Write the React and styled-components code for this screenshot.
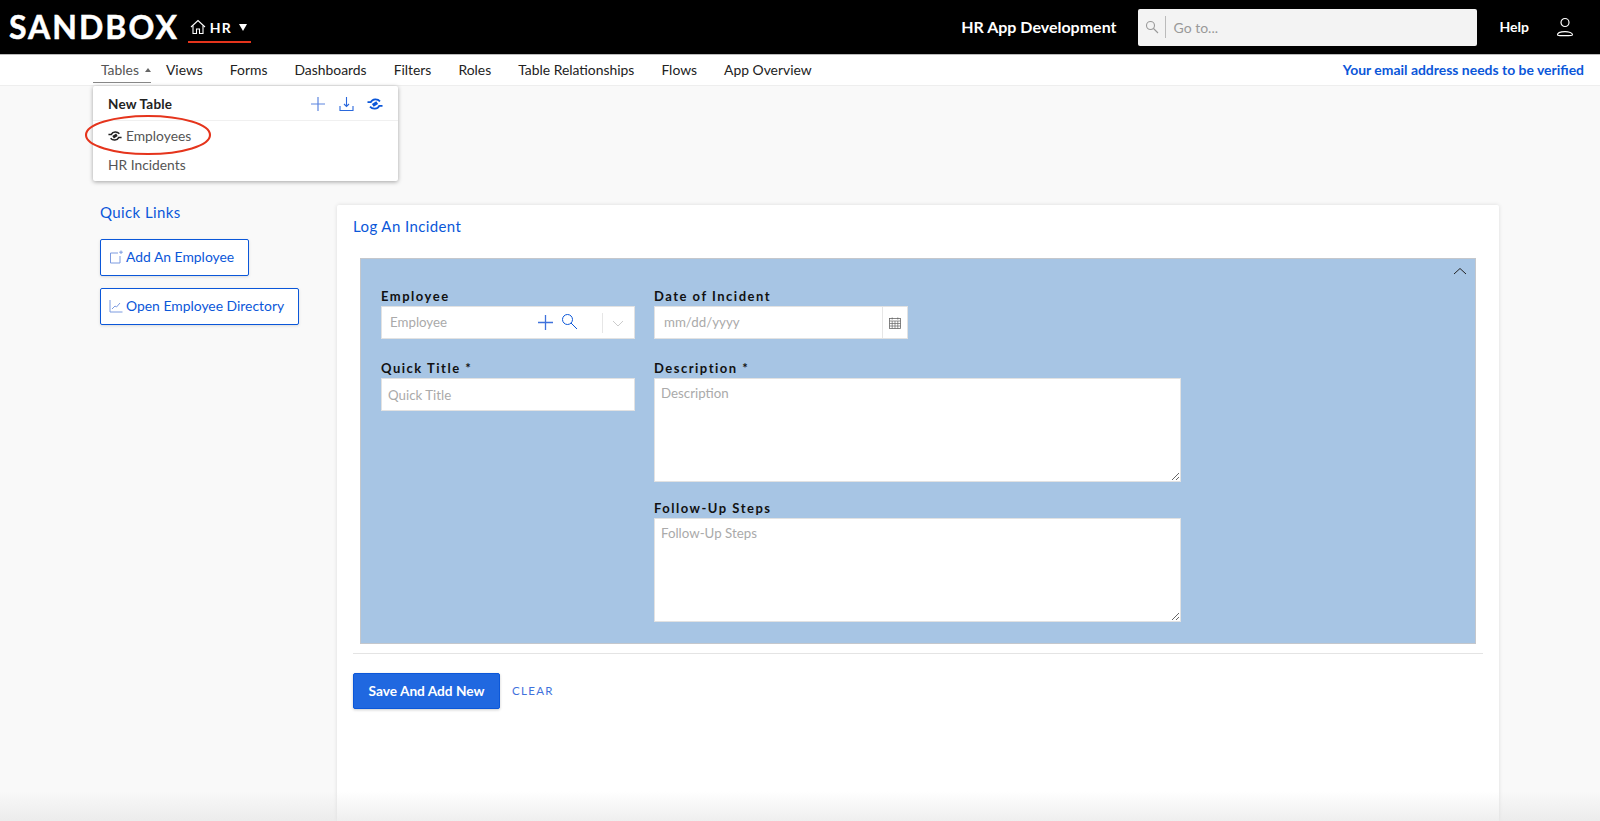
import React from "react";
import styled, { createGlobalStyle } from "styled-components";

const Global = createGlobalStyle`
  html, body { margin: 0; padding: 0; height: 100%; overflow: hidden; }
  body { font-family: "Lato", "Liberation Sans", sans-serif; background: #f9f9f9; color: #222; }
  * { box-sizing: border-box; }
`;

const Page = styled.div`
  position: relative;
  width: 1600px;
  height: 821px;
  overflow: hidden;
  display: flex;
  flex-direction: column;
`;
const Header = styled.header`
  height: 55px;
  flex: none;
  background: #000;
  border-bottom: 1px solid #bbb;
  display: flex;
  align-items: center;
  color: #fff;
  padding: 0 26px 0 9px;
`;
const Logo = styled.div`
  font-size: 32px;
  font-weight: 700;
  letter-spacing: 2px;
  line-height: 1;
  margin-top: -1px;
  -webkit-text-stroke: 0.5px #fff;
`;
const AppSwitch = styled.div`
  margin-left: 9px;
  width: 63px;
  height: 30px;
  margin-top: 2px;
  padding-left: 2px;
  border-bottom: 2px solid #e5341c;
  display: flex;
  align-items: center;
  gap: 4px;
  font-size: 14px;
  font-weight: 700;
  letter-spacing: 1px;
`;
const Caret = styled.span`
  width: 0;
  height: 0;
  border-left: 4.5px solid transparent;
  border-right: 4.5px solid transparent;
  border-top: 7px solid #fff;
  margin-left: 3px;
`;
const Spacer = styled.div`
  flex: 1;
`;
const WorkspaceName = styled.div`
  font-size: 16px;
  font-weight: 700;
  margin-right: 21px;
  padding-bottom: 2px;
`;
const GoTo = styled.div`
  width: 339px;
  height: 37px;
  background: #f3f3f3;
  border-radius: 2px;
  display: flex;
  align-items: center;
  padding-left: 7px;
  color: #999;
  font-size: 14px;
`;
const GoToDivider = styled.span`
  width: 1px;
  height: 22px;
  background: #bbb;
  margin: 0 8px 0 6px;
`;
const Help = styled.div`
  font-size: 14px;
  font-weight: 700;
  margin-left: 23px;
  margin-right: 27px;
  padding-bottom: 2px;
`;
const Nav = styled.nav`
  height: 31px;
  flex: none;
  background: #fff;
  border-bottom: 1px solid #eee;
  display: flex;
  align-items: center;
  padding: 0 16px 0 93px;
  font-size: 13.9px;
  color: #222;
`;
const NavItem = styled.a`
  display: flex;
  align-items: center;
  gap: 6px;
  height: 26px;
  margin-right: ${(p) => p.$gap}px;
  padding: 0 0 0 ${(p) => (p.$active ? 8 : 0)}px;
  border-bottom: 1px solid ${(p) => (p.$active ? "#888" : "transparent")};
  color: ${(p) => (p.$active ? "#555" : "#222")};
`;
const NavCaret = styled.span`
  width: 0;
  height: 0;
  border-left: 3px solid transparent;
  border-right: 3px solid transparent;
  border-bottom: 4px solid #666;
`;
const Verify = styled.a`
  margin-left: auto;
  color: #0b57d9;
  font-weight: 700;
  font-size: 13.95px;
  padding-bottom: 1px;
`;
const Main = styled.main`
  flex: 1;
  display: flex;
  align-items: stretch;
  padding: 119px 101px 0 100px;
  min-height: 0;
`;
const Sidebar = styled.aside`
  width: 237px;
  flex: none;
  display: flex;
  flex-direction: column;
  align-items: flex-start;
`;
const SideTitle = styled.div`
  color: #0b57d9;
  font-size: 15px;
  letter-spacing: 0.4px;
  line-height: 18px;
  margin-top: -2px;
  margin-bottom: 18px;
`;
const QuickLink = styled.a`
  display: flex;
  align-items: center;
  gap: 3px;
  height: 37px;
  padding: 0 14px 2px 8px;
  margin-bottom: 12px;
  background: #fff;
  border: 1px solid #0b57d9;
  border-radius: 2px;
  box-shadow: 0 1px 3px rgba(0, 0, 0, 0.12);
  color: #0b57d9;
  font-size: 13.9px;
`;
const Card = styled.section`
  flex: 1;
  margin-right: 0;
  background: #fff;
  border-radius: 2px 2px 0 0;
  box-shadow: 0 0 4px rgba(0, 0, 0, 0.12);
  padding: 12px 16px 0 16px;
  display: flex;
  flex-direction: column;
`;
const CardTitle = styled.h2`
  margin: 0 0 23px;
  font-weight: 400;
  font-size: 15px;
  line-height: 18px;
  color: #0b57d9;
  letter-spacing: 0.4px;
`;
const FormPanel = styled.div`
  position: relative;
  margin: 0 7px;
  height: 386px;
  background: #a7c5e4;
  border: 1px solid #c4c7cc;
  padding: 29px 0 0 20px;
  display: grid;
  grid-template-columns: 254px 527px;
  column-gap: 19px;
  align-content: start;
`;
const Collapse = styled.svg`
  position: absolute;
  top: 8px;
  right: 8px;
`;
const Column = styled.div`
  display: flex;
  flex-direction: column;
`;
const Field = styled.div`
  margin-bottom: ${(p) => p.$mb}px;
`;
const Label = styled.label`
  display: block;
  font-size: 13px;
  line-height: 16px;
  font-weight: 700;
  letter-spacing: 1.5px;
  color: #111;
  margin-bottom: 2px;
`;
const inputCss = `
  border: 1px solid #e2e2e2;
  background: #fff;
  font-family: "Lato", "Liberation Sans", sans-serif;
  font-size: 13.3px;
  outline: none;
  border-radius: 0;
  &::placeholder { color: #aaa; opacity: 1; }
`;
const TextInput = styled.input`
  ${inputCss}
  display: block;
  width: 254px;
  height: 33px;
  padding: 0 6px;
`;
const TextArea = styled.textarea`
  ${inputCss}
  display: block;
  width: 527px;
  height: 104px;
  padding: 6px 6px;
`;
const Compound = styled.div`
  width: 254px;
  height: 33px;
  background: #fff;
  border: 1px solid #e2e2e2;
  display: flex;
  align-items: center;
  font-size: 13.3px;
  color: #aaa;
`;
const CompoundText = styled.span`
  flex: 1;
  padding: 0 0 2px ${(p) => p.$pad}px;
`;
const VLine = styled.span`
  width: 1px;
  align-self: ${(p) => (p.$full ? "stretch" : "center")};
  height: ${(p) => (p.$full ? "auto" : "20px")};
  background: #e6e6e6;
`;
const CalendarBox = styled.span`
  width: 24px;
  display: flex;
  justify-content: center;
`;
const Divider = styled.hr`
  border: 0;
  height: 1px;
  background: #e4e4e4;
  width: 100%;
  margin: 9px 0 19px;
`;
const Actions = styled.div`
  display: flex;
  align-items: center;
  gap: 12px;
`;
const Primary = styled.button`
  width: 147px;
  height: 36px;
  border: 1px solid #0b57d9;
  border-radius: 2px;
  background: #2068e0;
  color: #fff;
  font-family: inherit;
  font-weight: 700;
  font-size: 13.7px;
  padding: 0 0 2px;
  box-shadow: 0 1px 3px rgba(0, 0, 0, 0.2);
`;
const Clear = styled.a`
  color: #3f72dc;
  font-size: 11.5px;
  letter-spacing: 1.3px;
  padding-bottom: 2px;
`;
const Dropdown = styled.div`
  position: absolute;
  left: 93px;
  top: 86px;
  width: 305px;
  height: 95px;
  background: #fff;
  border-radius: 2px;
  box-shadow: 0 1px 4px rgba(0, 0, 0, 0.35);
  font-size: 14px;
`;
const DropHead = styled.div`
  height: 35px;
  display: flex;
  align-items: center;
  padding: 1px 15px 0 15px;
  border-bottom: 1px solid #f0f0f0;
  font-weight: 700;
  font-size: 13.5px;
  letter-spacing: 0.2px;
  color: #222;
`;
const DropIcons = styled.div`
  margin-left: auto;
  display: flex;
  align-items: center;
  gap: 13px;
`;
const DropRow = styled.div`
  height: 29px;
  display: flex;
  align-items: center;
  gap: 4px;
  padding-left: 15px;
  color: #555;
  font-size: 13.8px;
`;
const Ellipse = styled.svg`
  position: absolute;
  left: 84px;
  top: 114px;
`;
const BottomFade = styled.div`
  position: absolute;
  left: 0;
  right: 0;
  bottom: 0;
  height: 30px;
  background: linear-gradient(rgba(225, 225, 225, 0), rgba(225, 225, 225, 0.55));
  pointer-events: none;
`;

const Handshake = ({ color, size = 16 }) => (
  <svg width={size} height={size} viewBox="0 0 16 16" fill="none" stroke={color}>
    <path d="M0.5 6.2 H3.8 C5.5 2.6 10.5 2.4 13 5.4" strokeWidth="1.7" />
    <path d="M15.5 9.8 H12.2 C10.5 13.4 5.5 13.6 3 10.6" strokeWidth="1.7" />
    <path d="M5.8 9.4 L10.2 6.6" strokeWidth="3.4" />
  </svg>
);

const navItems = [
  ["Views", 27],
  ["Forms", 27],
  ["Dashboards", 27],
  ["Filters", 27],
  ["Roles", 27],
  ["Table Relationships", 27],
  ["Flows", 27],
  ["App Overview", 0],
];

export default function App() {
  return (
    <Page>
      <Global />
      <Header>
        <Logo>SANDBOX</Logo>
        <AppSwitch>
          <svg width="16" height="16" viewBox="0 0 16 16" fill="none" stroke="#fff" strokeWidth="1.1">
            <path d="M1 8 L8 1.5 L15 8" />
            <path d="M3 6.5 V14.5 H6.5 V10 H9.5 V14.5 H13 V6.5" />
          </svg>
          HR
          <Caret />
        </AppSwitch>
        <Spacer />
        <WorkspaceName>HR App Development</WorkspaceName>
        <GoTo>
          <svg width="14" height="14" viewBox="0 0 14 14" fill="none" stroke="#999" strokeWidth="1.1">
            <circle cx="5.5" cy="5.5" r="4" />
            <path d="M8.5 8.5 L13 13" />
          </svg>
          <GoToDivider />
          Go to...
        </GoTo>
        <Help>Help</Help>
        <svg width="18" height="20" viewBox="0 0 18 20" fill="none" stroke="#fff" strokeWidth="1.2">
          <circle cx="9" cy="5.5" r="4" />
          <path d="M1.5 18 C1.5 13.5 16.5 13.5 16.5 18 C16.5 19 1.5 19 1.5 18 Z" />
        </svg>
      </Header>
      <Nav>
        <NavItem $active $gap={15}>
          Tables <NavCaret />
        </NavItem>
        {navItems.map(([t, g]) => (
          <NavItem key={t} $gap={g}>
            {t}
          </NavItem>
        ))}
        <Verify>Your email address needs to be verified</Verify>
      </Nav>
      <Main>
        <Sidebar>
          <SideTitle>Quick Links</SideTitle>
          <QuickLink>
            <svg width="14" height="14" viewBox="0 0 14 14" fill="none" stroke="#7d9be0" strokeWidth="1">
              <path d="M9 3 H1.5 V13 H11 V6" />
              <path d="M12 0.5 V4 M10.2 2.2 H13.8" />
            </svg>
            Add An Employee
          </QuickLink>
          <QuickLink>
            <svg width="14" height="14" viewBox="0 0 14 14" fill="none" stroke="#7d9be0" strokeWidth="1">
              <path d="M1 1 V13 H13.5" />
              <path d="M3 10 L6 7 L7.5 8 L11 4" />
            </svg>
            Open Employee Directory
          </QuickLink>
        </Sidebar>
        <Card>
          <CardTitle>Log An Incident</CardTitle>
          <FormPanel>
            <Collapse width="14" height="8" viewBox="0 0 14 8" fill="none" stroke="#222" strokeWidth="1">
              <path d="M1 7 L7 1.5 L13 7" />
            </Collapse>
            <Column>
              <Field $mb={21}>
                <Label>Employee</Label>
                <Compound>
                  <CompoundText $pad={8}>Employee</CompoundText>
                  <svg width="17" height="17" viewBox="0 0 17 17" fill="none" stroke="#3f72dc" strokeWidth="1.3">
                    <path d="M8.5 1 V16 M1 8.5 H16" />
                  </svg>
                  <svg width="17" height="17" viewBox="0 0 17 17" fill="none" stroke="#0b57d9" strokeWidth="1" style={{ margin: "0 24px 2px 7px" }}>
                    <circle cx="6.5" cy="6.5" r="5" />
                    <path d="M10 10 L16 16" />
                  </svg>
                  <VLine />
                  <svg width="12" height="7" viewBox="0 0 12 7" fill="none" stroke="#ccc" strokeWidth="1" style={{ margin: "2px 10px 0 9px" }}>
                    <path d="M1 1 L6 6 L11 1" />
                  </svg>
                </Compound>
              </Field>
              <Field $mb={0}>
                <Label>Quick Title *</Label>
                <TextInput placeholder="Quick Title" />
              </Field>
            </Column>
            <Column>
              <Field $mb={21}>
                <Label>Date of Incident</Label>
                <Compound>
                  <CompoundText $pad={9}>mm/dd/yyyy</CompoundText>
                  <VLine $full />
                  <CalendarBox>
                    <svg width="12" height="12" viewBox="0 0 12 12" fill="none" stroke="#666" strokeWidth="0.8">
                      <rect x="0.5" y="1.5" width="11" height="10" />
                      <path d="M3.2 0.5 V2.5 M8.8 0.5 V2.5" />
                      <path d="M0.5 4 H11.5 M0.5 6.5 H11.5 M0.5 9 H11.5 M3.2 4 V11.5 M6 4 V11.5 M8.8 4 V11.5" strokeWidth="0.7" />
                    </svg>
                  </CalendarBox>
                </Compound>
              </Field>
              <Field $mb={18}>
                <Label>Description *</Label>
                <TextArea placeholder="Description" />
              </Field>
              <Field $mb={0}>
                <Label>Follow-Up Steps</Label>
                <TextArea placeholder="Follow-Up Steps" />
              </Field>
            </Column>
          </FormPanel>
          <Divider />
          <Actions>
            <Primary>Save And Add New</Primary>
            <Clear>CLEAR</Clear>
          </Actions>
        </Card>
      </Main>
      <Dropdown>
        <DropHead>
          New Table
          <DropIcons>
            <svg width="16" height="16" viewBox="0 0 16 16" fill="none" stroke="#5d86e0" strokeWidth="1.2">
              <path d="M8 1 V15 M1 8 H15" />
            </svg>
            <svg width="15" height="16" viewBox="0 0 15 16" fill="none" stroke="#2a68dc" strokeWidth="1.1">
              <path d="M7.5 1 V10 M5 8 L7.5 10.5 L10 8" />
              <path d="M1 10 V14.5 H14 V10" />
            </svg>
            <Handshake color="#0b57d9" />
          </DropIcons>
        </DropHead>
        <DropRow>
          <Handshake color="#222" size={14} />
          Employees
        </DropRow>
        <DropRow>HR Incidents</DropRow>
      </Dropdown>
      <Ellipse width="128" height="42" viewBox="0 0 128 42" fill="none">
        <ellipse cx="64" cy="21" rx="62" ry="19" stroke="#e5341c" strokeWidth="2.1" />
      </Ellipse>
      <BottomFade />
    </Page>
  );
}
